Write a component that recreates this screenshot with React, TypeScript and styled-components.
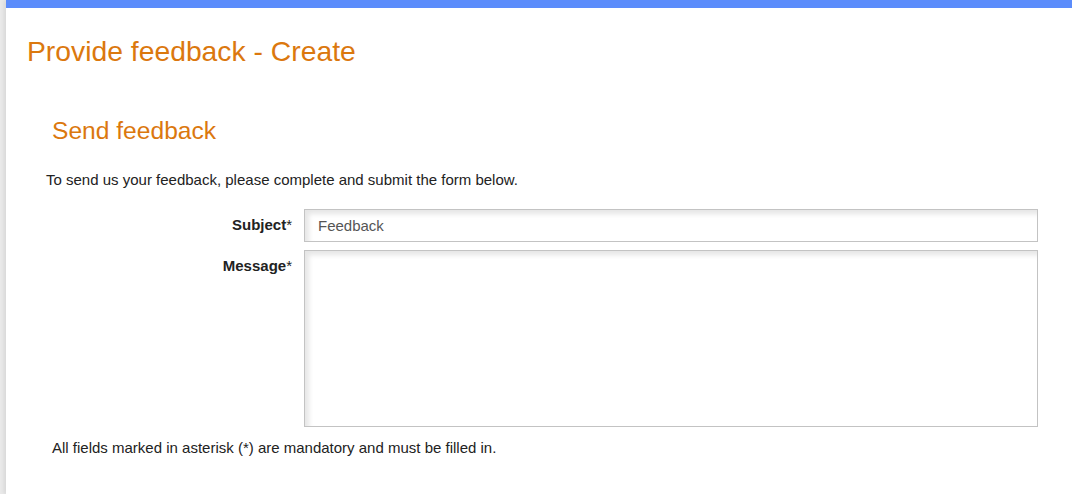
import styled, { createGlobalStyle } from "styled-components";

const Global = createGlobalStyle`
  html, body {
    margin: 0;
    padding: 0;
    background: #e9e9e9;
    font-family: "Liberation Sans", Arial, sans-serif;
  }
`;

export default function App() {
  return (
    <>
      <Global />
      <Page>
        <Title>Provide feedback - Create</Title>
        <Section>
          <SubTitle>Send feedback</SubTitle>
          <Intro>To send us your feedback, please complete and submit the form below.</Intro>
          <Form>
            <Label>
              <b>Subject</b>*
            </Label>
            <TextInput defaultValue="Feedback" />
            <Label>
              <b>Message</b>*
            </Label>
            <TextArea />
          </Form>
          <Note>All fields marked in asterisk (*) are mandatory and must be filled in.</Note>
        </Section>
      </Page>
    </>
  );
}

const Page = styled.div`
  margin-left: 6px;
  min-height: 494px;
  box-sizing: border-box;
  background: #fff;
  border-top: 8px solid #5b8cfb;
  box-shadow: -2px 0 4px rgba(0, 0, 0, 0.08);
  padding: 28px 0 0 21px;
`;

const Title = styled.h1`
  margin: 0;
  font-size: 28.3px;
  font-weight: normal;
  line-height: 30px;
  color: #db780e;
`;

const Section = styled.div`
  padding: 51px 34px 0 19px;
`;

const SubTitle = styled.h2`
  margin: 0 0 0 6px;
  font-size: 24.6px;
  font-weight: normal;
  line-height: 28px;
  color: #db780e;
`;

const Intro = styled.p`
  margin: 26px 0 0 0;
  font-size: 15px;
  line-height: 18px;
  color: #222;
`;

const Form = styled.div`
  display: grid;
  grid-template-columns: 246px 1fr;
  column-gap: 12px;
  row-gap: 8px;
  margin-top: 20px;
`;

const Label = styled.label`
  text-align: right;
  font-size: 15px;
  line-height: 18px;
  color: #222;
  padding-top: 7px;
`;

const fieldStyle = `
  box-sizing: border-box;
  width: 100%;
  border: 1px solid #c3c3c3;
  background: #fff;
  box-shadow: inset 4px 4px 5px rgba(0, 0, 0, 0.1);
  font-family: "Liberation Sans", Arial, sans-serif;
  font-size: 15px;
  color: #555;
  outline: none;
`;

const TextInput = styled.input`
  ${fieldStyle}
  height: 33px;
  padding: 0 13px;
`;

const TextArea = styled.textarea`
  ${fieldStyle}
  height: 177px;
  resize: none;
  display: block;
  padding: 8px 13px;
`;

const Note = styled.p`
  margin: 12px 0 0 6px;
  font-size: 15px;
  line-height: 18px;
  color: #222;
`;
